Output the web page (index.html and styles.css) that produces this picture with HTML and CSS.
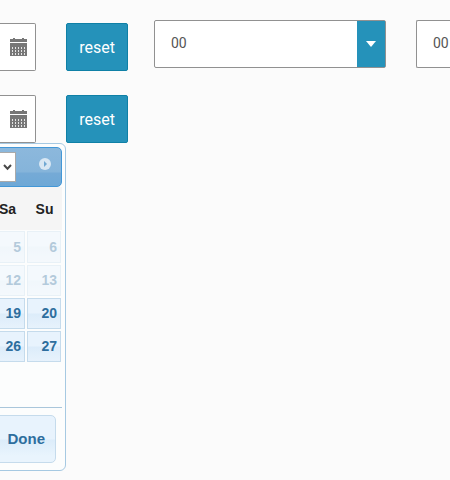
FILE: index.html
```html
<!DOCTYPE html>
<html lang="en">
<head>
<meta charset="utf-8">
<title>Date range</title>
<link rel="stylesheet" href="styles.css">
</head>
<body>
<svg width="0" height="0" class="defs">
  <symbol id="calendar" viewBox="0 0 17 18" shape-rendering="crispEdges">
    <path fill="#777" d="M0 1h3V0h2v1h7V0h2v1h3v3H0zM0 5h17v13H0z"/>
    <path fill="#e4e4e4" d="M2 9h1v2H2zm3 0h1v2H5zm3 0h1v2H8zm3 0h1v2h-1zm3 0h1v2h-1zM2 12h1v2H2zm3 0h1v2H5zm3 0h1v2H8zm3 0h1v2h-1zm3 0h1v2h-1zM2 15h1v2H2zm3 0h1v2H5zm3 0h1v2H8zm3 0h1v2h-1zm3 0h1v2h-1z"/>
  </symbol>
</svg>
<main class="form">
  <div class="dates">
    <div class="row">
      <div class="field"><svg class="cal"><use href="#calendar"/></svg></div>
      <button class="reset">reset</button>
    </div>
    <div class="row">
      <div class="field"><svg class="cal"><use href="#calendar"/></svg></div>
      <button class="reset">reset</button>
    </div>
  </div>
  <div class="select"><span>00</span><div class="arrow"><svg width="10" height="6" viewBox="0 0 10 6"><path fill="#fff" d="M0 0h10L5 6z"/></svg></div></div>
  <div class="select cut"><span>00</span></div>
</main>
<div class="picker">
  <div class="header">
    <div class="year"><svg width="9" height="7" viewBox="0 0 9 7"><path d="M1 1l3.5 3.7L8 1" fill="none" stroke="#484848" stroke-width="2"/></svg></div>
    <svg class="next" width="12" height="12" viewBox="0 0 12 12"><circle cx="6" cy="6" r="6" fill="#d8e7f3"/><path d="M5 3l3 3-3 3z" fill="#70a8d2"/></svg>
  </div>
  <div class="week"><b>Sa</b><b>Su</b></div>
  <div class="days">
    <span class="day off first">5</span><span class="day off first">6</span>
    <span class="day off">12</span><span class="day off">13</span>
    <span class="day">19</span><span class="day">20</span>
    <span class="day">26</span><span class="day">27</span>
  </div>
  <div class="footer"><button class="done">Done</button></div>
</div>
</body>
</html>
```
FILE: styles.css
```css
* { box-sizing: border-box; }
body { margin: 0; height: 480px; overflow: hidden; background: #fbfbfb; font-family: Roboto, sans-serif; position: relative; }
.defs { display: block; }
.form { display: flex; align-items: flex-start; padding-top: 20px; width: 450px; }
.dates { display: flex; flex: none; flex-direction: column; gap: 24px; padding-top: 3px; width: 154px; }
.row { display: flex; gap: 30px; }
.field { width: 36px; height: 48px; background: #fff; border: 1px solid #919191; border-left: 0; border-radius: 0 2px 2px 0; padding: 14px 0 0 10px; }
.cal { display: block; width: 17px; height: 18px; }
.reset { width: 62px; height: 48px; padding: 0; border: 1px solid #0f80a6; border-radius: 2px; background: #2592ba; color: #fff; font: 16px Roboto, sans-serif; }
.select { display: flex; flex: none; justify-content: space-between; width: 232px; height: 48px; margin-right: 30px; border: 1px solid #919191; border-radius: 2px; background: #fff; color: #555; font-size: 14px; line-height: 45px; padding-left: 16px; }
.select.cut { width: 34px; margin-right: 0; border-right: 0; border-radius: 2px 0 0 2px; }
.arrow { display: flex; align-items: center; justify-content: center; width: 28px; background: #2592ba; }
.picker { position: absolute; left: -13px; top: 143px; width: 79px; height: 328px; padding: 3px; border: 1px solid #a6c9e2; border-radius: 6px; background: #fcfdfd; font-family: "Liberation Sans", Arial, sans-serif; font-weight: bold; }
.header { display: flex; align-items: flex-start; gap: 23px; height: 40px; padding-top: 4px; border: 1px solid #4297d7; border-radius: 5px; background: linear-gradient(#8cb8dc 0 1px, #85b4da 24px, #75aad6 25px, #6ea8d6); }
.year { display: flex; align-items: center; justify-content: flex-end; width: 26px; height: 30px; margin-left: -2px; padding-right: 3px; background: #fff; border: 1px solid #aaa; }
.next { margin-top: 6px; }
.week { display: grid; grid-template-columns: 33px 41px; height: 43px; background: #f5f5f5; color: #222; font-size: 14px; line-height: 44px; text-align: center; }
.days { display: grid; grid-template-columns: 34px 34px; grid-template-rows: 32px repeat(3, 31px); gap: 2px; padding-top: 1px; height: 178px; border-bottom: 1px solid #a9c6db; }
.day { border: 1px solid #c5dbec; background: linear-gradient(#e8f3fd 0 14px, #dcecfa 15px, #e7f2fc); color: #2e6e9e; font-size: 14px; line-height: 29px; text-align: right; padding-right: 3px; }
.day.off { opacity: .35; }
.day.first { line-height: 31px; }
.footer { padding: 7px 6px 0 0; display: flex; justify-content: flex-end; }
.done { flex: none; width: 66px; height: 48px; padding: 0 10px 0 0; border: 1px solid #c5dbec; border-radius: 5px; background: linear-gradient(#e8f3fd 0 23px, #dcecfa 24px, #e9f4fd 40px); color: #2e6e9e; font: bold 15px/44px "Liberation Sans", Arial, sans-serif; text-align: right; }
```
